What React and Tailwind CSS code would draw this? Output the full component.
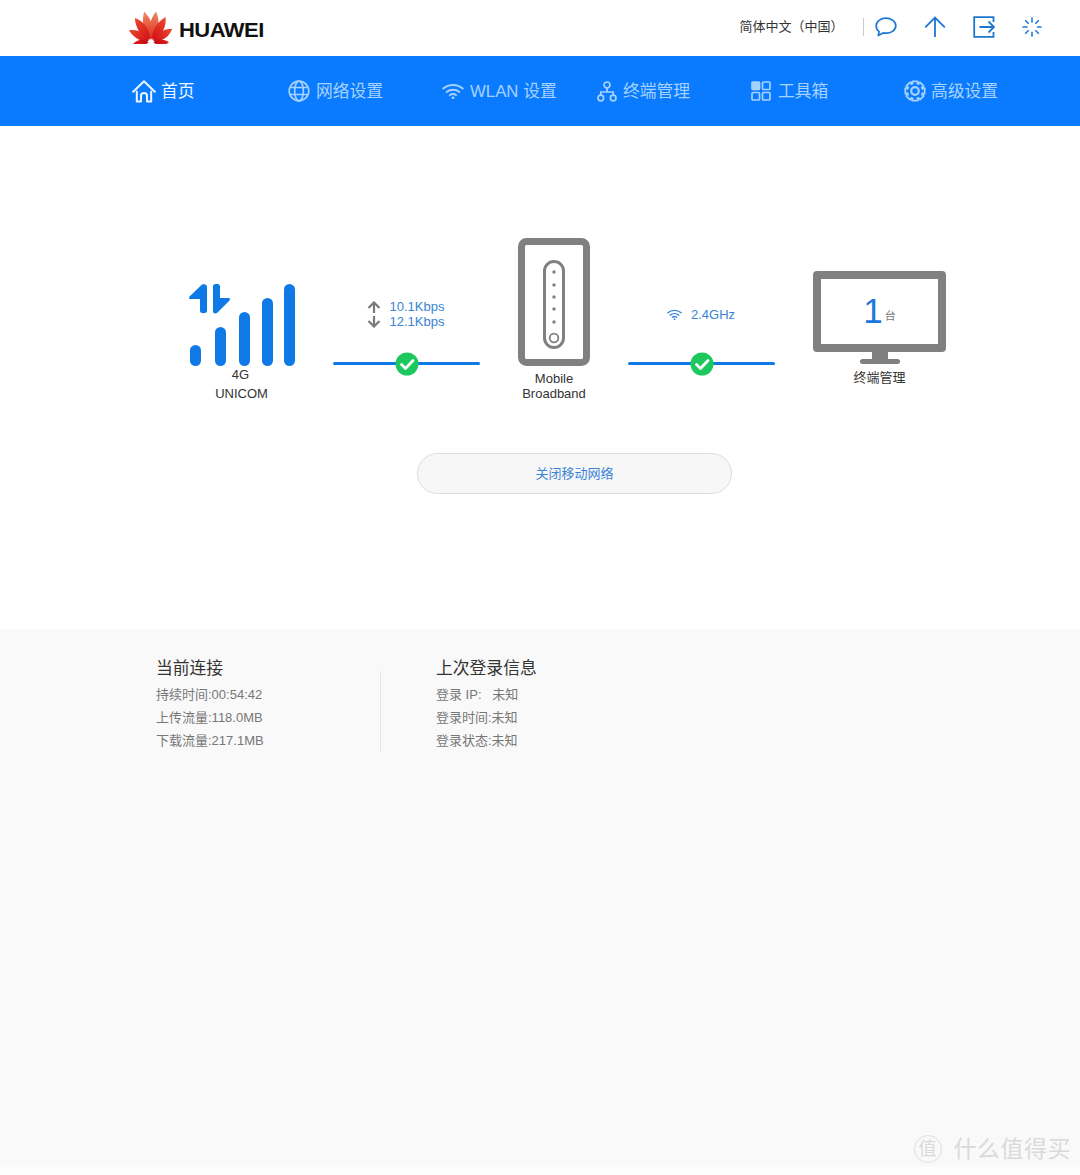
import React from 'react';

const NAV_OFF = '#a6d2ff';

const HuaweiLogo = () => {
    const petals = [
        { r: -11, l: 31, w: 6, f: 'url(#petalTop)' }, { r: 11, l: 31, w: 6, f: 'url(#petalTop)' },
        { r: -32, l: 29, w: 6, f: 'url(#petal)' }, { r: 32, l: 29, w: 6, f: 'url(#petal)' },
        { r: -60, l: 25, w: 5.5, f: 'url(#petal)' }, { r: 60, l: 25, w: 5.5, f: 'url(#petal)' },
        { r: -93, l: 18, w: 4, f: 'url(#petalLow)' }, { r: 93, l: 18, w: 4, f: 'url(#petalLow)' },
    ];
    return (
        <svg width="44" height="34" viewBox="0 0 44 34" className="-mt-[3px]">
            <defs>
                <linearGradient id="petalTop" x1="0" y1="0" x2="0" y2="1">
                    <stop offset="0" stopColor="#f08a62" />
                    <stop offset="1" stopColor="#dc2a20" />
                </linearGradient>
                <linearGradient id="petal" x1="0" y1="0" x2="0" y2="1">
                    <stop offset="0" stopColor="#ee4a30" />
                    <stop offset="1" stopColor="#d10f16" />
                </linearGradient>
                <linearGradient id="petalLow" x1="0" y1="0" x2="0" y2="1">
                    <stop offset="0" stopColor="#e0201c" />
                    <stop offset="1" stopColor="#c00a12" />
                </linearGradient>
            </defs>
            {petals.map((p, i) => (
                <path
                    key={i}
                    transform={`translate(22 32) rotate(${p.r})`}
                    fill={p.f}
                    d={`M0 -2.5 C${-p.w} -${p.l * 0.35} ${-p.w * 0.9} -${p.l * 0.72} ${-p.w * 0.15} -${p.l} C${p.w * 0.9} -${p.l * 0.72} ${p.w} -${p.l * 0.35} 0 -2.5Z`}
                />
            ))}
        </svg>
    );
};

const HomeIcon = () => (
    <svg width="24" height="23" viewBox="0 0 24 23" fill="none" stroke="#eaf5ff" strokeWidth="2" strokeLinejoin="round" strokeLinecap="round">
        <path d="M1.200 11.800 12 1.200l10.800 10.600" />
        <path d="M4.800 11.500 4.800 21.500H9V15.500c0-3.500 6-3.500 6 0V21.500H19.200V11.500" />
    </svg>
);

const GlobeIcon = () => (
    <svg width="22" height="22" viewBox="0 0 22 22" fill="none" stroke={NAV_OFF} strokeWidth="1.7">
        <circle cx="11" cy="11" r="9.800" />
        <ellipse cx="11" cy="11" rx="4.400" ry="9.800" />
        <path d="M1.800 7.500h18.400M1.800 14.500h18.400" />
    </svg>
);

const WifiIcon = ({ color = NAV_OFF, size = 22, sw = 1.9 }) => (
    <svg width={size} height={size * 0.77} viewBox="0 0 22 17" fill="none" stroke={color} strokeWidth={sw} strokeLinecap="round">
        <path d="M1.200 5.600c5.600-4.800 14-4.800 19.600 0" />
        <path d="M4.600 9c3.700-3 9.100-3 12.800 0" />
        <path d="M7.800 12.200c1.900-1.400 4.500-1.400 6.400 0" />
        <circle cx="11" cy="15" r="1.400" fill={color} stroke="none" />
    </svg>
);

const NetworkIcon = () => (
    <svg width="20" height="21" viewBox="0 0 20 21" fill="none" stroke={NAV_OFF} strokeWidth="1.7">
        <circle cx="10" cy="4" r="3" />
        <circle cx="3.800" cy="17" r="2.800" />
        <circle cx="16.200" cy="17" r="2.800" />
        <path d="M10 7v4M3.800 14.200V11h12.400v3.200" />
    </svg>
);

const ToolsIcon = () => (
    <svg width="20" height="20" viewBox="0 0 20 20" fill="none" stroke={NAV_OFF} strokeWidth="1.7">
        <rect x="1" y="1" width="7.500" height="7.500" rx="1" fill={NAV_OFF} />
        <rect x="11.500" y="1" width="7.500" height="7.500" rx="1" />
        <rect x="1" y="11.500" width="7.500" height="7.500" rx="1" />
        <rect x="11.500" y="11.500" width="7.500" height="7.500" rx="1" />
    </svg>
);

// eight chunky teeth round the hub
const gearPath = () => {
    const pts = [];
    for (let i = 0; i < 8; i++) {
        const a = (i * Math.PI) / 4;
        [[7.8, -0.5], [10, -0.26], [10, 0.26], [7.8, 0.5]].forEach(([r, d]) => {
            pts.push(`${(11 + r * Math.sin(a + d)).toFixed(2)} ${(11 - r * Math.cos(a + d)).toFixed(2)}`);
        });
    }
    return `M${pts.join('L')}Z`;
};

const GearIcon = () => (
    <svg width="22" height="22" viewBox="0 0 22 22" fill="none" stroke={NAV_OFF} strokeWidth="1.8" strokeLinejoin="round">
        <path d={gearPath()} />
        <circle cx="11" cy="11" r="3.800" strokeWidth="2.200" />
    </svg>
);

const BubbleIcon = () => (
    <svg width="22" height="20" viewBox="0 0 22 20" fill="none" stroke="#1e78d2" strokeWidth="1.7" strokeLinejoin="round">
        <path d="M11 1.200c5.300 0 9.800 3.200 9.800 7.500 0 4.300-4.500 7.500-9.800 7.500-1 0-2-.1-2.900-.3L3.200 18.600l.9-3.900C2.300 13.300 1.200 11.200 1.200 8.700 1.200 4.400 5.700 1.200 11 1.200Z" />
    </svg>
);

const UpIcon = () => (
    <svg width="22" height="22" viewBox="0 0 22 22" fill="none" stroke="#1e78d2" strokeWidth="1.8">
        <path d="M11 21V1.500M1.200 11.300 11 1.500l9.800 9.800" />
    </svg>
);

const ExitIcon = () => (
    <svg width="22" height="22" viewBox="0 0 22 22" fill="none" stroke="#1e78d2" strokeWidth="1.8">
        <path d="M20.500 6V1.200H1.200v19.600h19.300V16" />
        <path d="M6.500 11h14.500M15.500 5.500 21 11l-5.500 5.500" />
    </svg>
);

const SpinnerIcon = () => (
    <svg width="20" height="20" viewBox="0 0 20 20" fill="none" stroke="#1e78d2" strokeWidth="1.600" strokeLinecap="round">
        <path d="M10 1v4M10 15.500V19M1 10h4M15.500 10H19M3.700 3.700l2.500 2.500M13.800 13.800l2.500 2.500M16.300 3.700l-2.500 2.500M6.200 13.800l-2.500 2.500" />
    </svg>
);

const SignalIcon = () => (
    <svg width="107" height="82" viewBox="0 0 107 82" fill="#0f7ae5">
        <rect x="1" y="61" width="11" height="21" rx="5.500" />
        <rect x="26" y="43" width="11" height="39" rx="5.500" />
        <rect x="50" y="28" width="11" height="54" rx="5.500" />
        <rect x="73" y="14" width="11" height="68" rx="5.500" />
        <rect x="95" y="0" width="11" height="82" rx="5.500" />
        <path d="M12 1.500c1-1.500 6-2 6 1.500v24c0 3-7 3-7 0V15H1.500C0 15-.500 13.500.500 12.500Z" />
        <path d="M24 2.500c0-3.500 7-3.500 7 0V14h8.500c1.500 0 2 1.500 1 2.500L28 29c-2 1-4 .5-4-2Z" />
    </svg>
);

const RouterIcon = () => (
    <svg width="72" height="128" viewBox="0 0 72 128" fill="none">
        <rect x="3.500" y="3.500" width="65" height="121" rx="5" stroke="#808080" strokeWidth="7" />
        <rect x="26.500" y="23.500" width="19" height="86" rx="9.500" stroke="#808080" strokeWidth="3" />
        {[34, 47, 59, 71, 84].map(y => (
            <circle key={y} cx="36" cy={y} r="1.700" fill="#808080" />
        ))}
        <circle cx="36" cy="100" r="4.300" stroke="#808080" strokeWidth="1.800" />
    </svg>
);

const CheckBadge = () => (
    <svg width="24" height="24" viewBox="0 0 24 24">
        <circle cx="12" cy="12" r="11.500" fill="#1dc85e" />
        <path d="M6.500 12.500 10.500 16.500 18 8.500" fill="none" stroke="#fff" strokeWidth="2.800" strokeLinecap="round" strokeLinejoin="round" />
    </svg>
);

const SmallArrow = ({ down }) => (
    <svg width="14" height="12" viewBox="0 0 14 12" fill="none" stroke="#7a7a7a" strokeWidth="2.200" className={down ? 'rotate-180' : ''}>
        <path d="M7 12V1.500M1.500 7 7 1.500 12.500 7" />
    </svg>
);

const Link = ({ children }) => (
    <div className="w-[147px] flex flex-col">
        <div className="h-[48px] flex flex-col justify-center">{children}</div>
        <div className="h-[3px] mt-[24px] bg-[#0f7ae5] rounded-full relative flex justify-center">
            <div className="absolute -top-[10px] ml-[1px]"><CheckBadge /></div>
        </div>
    </div>
);

const navItems = [
    { label: '首页', icon: HomeIcon, active: true, w: 'w-[156px]', gap: 'gap-[5px]' },
    { label: '网络设置', icon: GlobeIcon, w: 'w-[154px]', gap: 'gap-[6px]' },
    { label: 'WLAN 设置', icon: WifiIcon, w: 'w-[155px]', gap: 'gap-[6px]' },
    { label: '终端管理', icon: NetworkIcon, w: 'w-[154px]', gap: 'gap-[6px]' },
    { label: '工具箱', icon: ToolsIcon, w: 'w-[153px]', gap: 'gap-[7px]' },
    { label: '高级设置', icon: GearIcon, w: 'w-[150px]', gap: 'gap-[5px]' },
];

const current = ['持续时间:00:54:42', '上传流量:118.0MB', '下载流量:217.1MB'];
const lastLogin = ['登录 IP:\u00a0\u00a0\u00a0未知', '登录时间:未知', '登录状态:未知'];

const InfoBlock = ({ title, rows, className }) => (
    <div className={className}>
        <h3 className="text-[16.800px] leading-[24px] text-[#333]">{title}</h3>
        <div className="mt-[2px]">
            {rows.map(r => (
                <p key={r} className="text-[13px] leading-[23px] text-[#777]">{r}</p>
            ))}
        </div>
    </div>
);

export default function App() {
    return (
        <div className="relative w-[1080px] h-[1175px] flex flex-col overflow-hidden bg-white font-['Liberation_Sans','Noto_Sans_CJK_SC',sans-serif]">
            <header className="h-[56px] shrink-0 flex items-center justify-between pl-[129px] pr-[38px]">
                <div className="flex items-center gap-[6px]">
                    <HuaweiLogo />
                    <span className="text-[20px] font-bold tracking-[-0.5px] text-[#111] mt-[3px] scale-x-[1.1] origin-left">HUAWEI</span>
                </div>
                <div className="flex items-center">
                    <span className="text-[13px] text-[#333] -mt-[2px]">简体中文（中国）</span>
                    <div className="w-px h-[18px] bg-[#ccc] ml-[19px] mr-[11.500px] -mt-[2px]" />
                    <div className="flex items-center gap-[27px] -mt-[2px]">
                        <BubbleIcon />
                        <UpIcon />
                        <ExitIcon />
                        <SpinnerIcon />
                    </div>
                </div>
            </header>

            <nav className="h-[70px] shrink-0 bg-[#0a7bff] flex items-center pl-[132px]">
                {navItems.map(item => (
                    <div key={item.label} className={`${item.w} ${item.gap} flex items-center`}>
                        <item.icon />
                        <span className={`text-[16.800px] mt-[2px] ${item.active ? 'text-[#eaf5ff]' : 'text-[#a6d2ff]'}`}>{item.label}</span>
                    </div>
                ))}
            </nav>

            <main className="h-[503px] shrink-0 bg-white flex flex-col">
                <div className="flex items-start pl-[189px] pt-[112px] gap-[37.500px]">
                    <div className="w-[107px] mt-[46px] flex flex-col items-center">
                        <SignalIcon />
                        <div className="text-[13px] leading-[19px] text-[#333] text-center mt-[-1px]">
                            <p className="pr-[4px]">4G</p>
                            <p className="pr-[2px]">UNICOM</p>
                        </div>
                    </div>

                    <div className="mt-[52px] -ml-[1px]">
                        <Link>
                            <div className="grid grid-cols-[14px_auto] justify-center items-center gap-x-[9px] text-[13px] leading-[15px] text-[#3a84d6] pr-[1px]">
                                <SmallArrow /><span>10.1Kbps</span>
                                <SmallArrow down /><span>12.1Kbps</span>
                            </div>
                        </Link>
                    </div>

                    <div className="w-[72px] ml-[1px] flex flex-col items-center">
                        <RouterIcon />
                        <p className="w-[80px] text-[13px] leading-[15px] text-[#333] text-center mt-[5px]">Mobile Broadband</p>
                    </div>

                    <div className="mt-[52px]">
                        <Link>
                            <div className="flex items-center justify-center gap-[9px] text-[13px] text-[#3a84d6] mt-[1px]">
                                <WifiIcon color="#3a84d6" size={15} sw={2} />
                                <span>2.4GHz</span>
                            </div>
                        </Link>
                    </div>

                    <div className="w-[133px] mt-[33px] ml-[1px] flex flex-col items-center">
                        <div className="w-[133px] h-[81px] border-[8px] border-[#808080] rounded-[4px] flex items-center justify-center gap-[2px]">
                            <span className="text-[35px] font-light leading-none text-[#1a78e0] -mt-[2px]">1</span>
                            <span className="text-[11px] text-[#777] mt-[9px]">台</span>
                        </div>
                        <div className="w-[16px] h-[7px] bg-[#808080]" />
                        <div className="w-[40px] h-[5px] bg-[#808080] rounded-full" />
                        <p className="text-[13px] leading-[18px] text-[#333] mt-[5px]">终端管理</p>
                    </div>
                </div>

                <button className="self-start ml-[417px] mt-[50px] pt-[1px] w-[315px] h-[41px] rounded-full bg-[#f7f7f7] border border-[#dddddd] text-[13px] text-[#3a84d6]">
                    关闭移动网络
                </button>
            </main>

            <section className="h-[538px] shrink-0 bg-[#f9f9f9] pl-[156px] pt-[27px] flex items-start">
                <InfoBlock title="当前连接" rows={current} className="w-[224px] mt-[1px]" />
                <div className="w-px h-[80px] bg-[#e6e6e6] mt-[15px]" />
                <InfoBlock title="上次登录信息" rows={lastLogin} className="ml-[55px] mt-[1px]" />
            </section>

            <div className="flex-1 bg-[#fdfdfd]" />

            {/* site watermark over the bottom right corner */}
            <div className="absolute right-[9px] bottom-[12px] flex items-center gap-[12px] text-[#dadada]">
                <div className="w-[28px] h-[28px] rounded-full border border-[#dfdfdf] flex items-center justify-center text-[18px] leading-none">值</div>
                <span className="text-[23px] leading-none tracking-[0.5px]">什么值得买</span>
            </div>
        </div>
    );
}
